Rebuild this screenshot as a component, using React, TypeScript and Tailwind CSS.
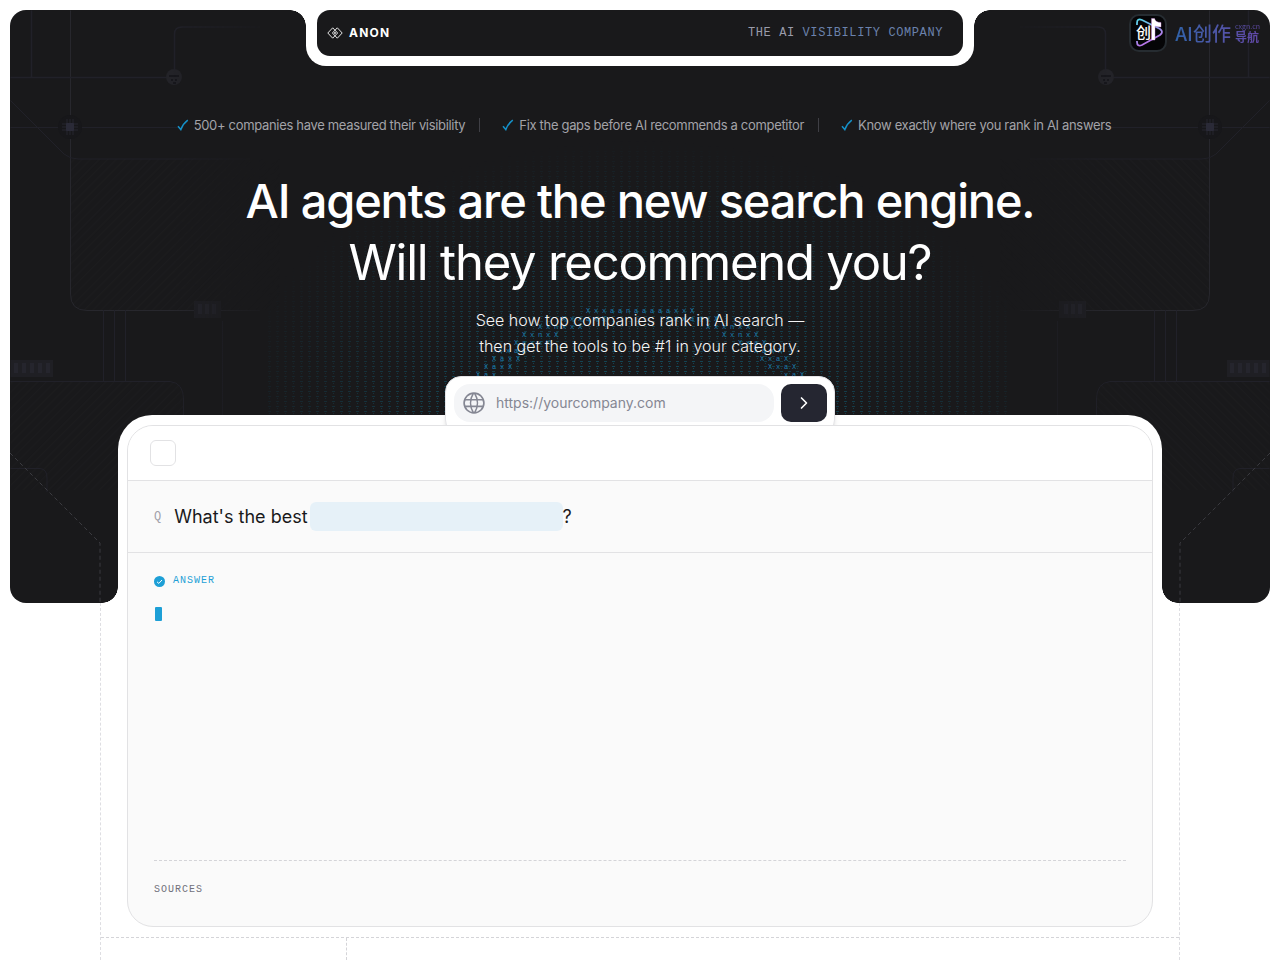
import { ChevronRight } from "lucide-react";

const BENEFITS = [
  "500+ companies have measured their visibility",
  "Fix the gaps before AI recommends a competitor",
  "Know exactly where you rank in AI answers",
];

// One ring of the ascii globe: first column centre, baseline, characters.
const ASCII_ROWS = [
  { x: 588, y: 303, chars: "XxxaanaaaaaxxX" },
  { x: 564, y: 311, chars: "XxxaxX" },
  { x: 668, y: 311, chars: "XxxanxX" },
  { x: 540, y: 319, chars: "XxnxxX" },
  { x: 708, y: 319, chars: "XxxnxX" },
  { x: 524, y: 327, chars: "XxnxX" },
  { x: 724, y: 327, chars: "XxnxX" },
  { x: 516, y: 335, chars: "XaxxX" },
  { x: 740, y: 335, chars: "XxaX" },
  { x: 500, y: 343, chars: "XxaX" },
  { x: 756, y: 343, chars: "XaxX" },
  { x: 494, y: 351, chars: "XaxX" },
  { x: 762, y: 351, chars: "XxaX" },
  { x: 486, y: 359, chars: "XaxX" },
  { x: 770, y: 359, chars: "XxaX" },
  { x: 478, y: 367, chars: "Xax" },
  { x: 786, y: 367, chars: "xaX" },
];

function AnonMark() {
  return (
    <svg viewBox="0 0 16 12" className="h-3 w-4" fill="none" stroke="currentColor" strokeWidth="0.9" aria-hidden="true">
      <path d="M5.700 0.800 0.800 6 5.700 11.200 10.600 6Z" />
      <path d="M10.300 0.800 5.400 6 10.300 11.200 15.200 6Z" />
      <path d="M8 5.200 8.800 6 8 6.800 7.200 6Z" />
    </svg>
  );
}

function CheckMark() {
  return (
    <svg viewBox="0 0 12 12" className="h-3 w-3 text-[#1590c8]" fill="none" stroke="currentColor" strokeWidth="1.5" aria-hidden="true">
      <path d="M1 7.2 3.8 10.6C5.4 6.6 7.5 3.6 10.8 1.2" />
    </svg>
  );
}

function WorldIcon() {
  return (
    <svg viewBox="2 2 20 20" className="h-[22px] w-[22px] shrink-0" fill="none" stroke="currentColor" strokeWidth="1.5" aria-hidden="true">
      <circle cx="12" cy="12" r="9" />
      <path d="M3.6 9h16.8M3.6 15h16.8M11.5 3a17 17 0 0 0 0 18M12.5 3a17 17 0 0 1 0 18" />
    </svg>
  );
}

function Circuit({ className, id }: { className: string; id: string }) {
  return (
    <svg viewBox="0 0 270 593" className={className} fill="none" stroke="#212129" aria-hidden="true">
      <defs>
        <pattern id={id} width="6" height="6" patternUnits="userSpaceOnUse" patternTransform="rotate(45)">
          <path d="M0 0V6" stroke="#1c1c1e" strokeWidth="3" />
        </pattern>
        <linearGradient id={`${id}-fade`} x1="0" x2="1">
          <stop offset="0" stopColor="#fff" />
          <stop offset="0.6" stopColor="#fff" />
          <stop offset="1" stopColor="#000" />
        </linearGradient>
        <mask id={`${id}-mask`} maskUnits="userSpaceOnUse" x="0" y="0" width="270" height="593">
          <rect width="270" height="593" fill={`url(#${id}-fade)`} />
        </mask>
      </defs>
      <g mask={`url(#${id}-mask)`}>
        <path d="M60 149H270V300H76Q60 300 60 284ZM0 372H160Q173 372 173 388V480H0Z" fill={`url(#${id})`} stroke="none" />
        <path d="M60.5 0V284Q60.5 300.5 77 300.5H250" stroke="#27272d" />
        <path d="M21.5 0V67M0 67.5H164M164.5 67V24Q164.5 17 172 17H250" strokeWidth="1.5" />
        <path d="M0 117.5H170M0 90 54 144Q60 149 68 149H240" />
        <path d="M93.5 300V371M104.5 300V371M115.5 300V371M212.5 311V405M0 371.5H160Q173.5 373 173.5 389V405" />
        <path d="M0 458.5H30Q37 459 37 468V482" />
        <g fill="#1f1f24" stroke="none">
          <rect x="184" y="291" width="27" height="17" />
          <rect x="0" y="350" width="43" height="17" />
          <circle cx="164" cy="67" r="8" fill="#232328" />
        </g>
        <circle cx="60" cy="117" r="12" fill="#17171a" stroke="none" />
        <path d="M57 109v16M60 109v16M63 109v16M52 114h16M52 117h16M52 120h16" stroke="#26262f" />
        <rect x="56" y="113" width="8" height="8" rx="1" fill="#2a2a37" stroke="none" />
        <path d="M159 66h10M161 70h2M165 70h2M163 73h3" stroke="#151518" strokeWidth="1.5" />
        <path d="M190 294v10M197 294v10M204 294v10M6 353v10M14 353v10M22 353v10M30 353v10M38 353v10" stroke="#25252d" strokeWidth="4" />
      </g>
      <path d="M0 443 90 533V593" stroke="#3b3b40" strokeDasharray="4 3" />
    </svg>
  );
}

function AsciiGlobe() {
  return (
    <svg viewBox="250 0 760 406" className="absolute bottom-0 left-1/2 h-[406px] w-[760px] -translate-x-1/2" aria-hidden="true">
      <defs>
        <pattern id="ascii-dash" width="8" height="5" patternUnits="userSpaceOnUse">
          <path d="M2 1.5h3" stroke="#0f7f9e" />
          <path d="M3 3.5h1" stroke="#0f7f9e" />
        </pattern>
        <radialGradient id="ascii-fade" gradientUnits="userSpaceOnUse" cx="0" cy="0" r="1" gradientTransform="translate(630 420) scale(420 290)">
          <stop offset="0" stopColor="#fff" stopOpacity="0.5" />
          <stop offset="0.5" stopColor="#fff" stopOpacity="0.36" />
          <stop offset="0.85" stopColor="#fff" stopOpacity="0.12" />
          <stop offset="1" stopColor="#fff" stopOpacity="0" />
        </radialGradient>
        <mask id="ascii-mask" maskUnits="userSpaceOnUse" x="250" y="130" width="760" height="280">
          <rect x="258" y="130" width="744" height="280" fill="url(#ascii-fade)" />
        </mask>
      </defs>
      <rect x="250" y="130" width="760" height="276" fill="url(#ascii-dash)" mask="url(#ascii-mask)" />
      <g fill="#1a7cab" fontSize="7" fontFamily="Liberation Mono, monospace">
        {ASCII_ROWS.map((row) => (
          <text key={`${row.x}-${row.y}`} x={row.chars.split("").map((_, i) => row.x - 12 + i * 8).join(" ")} y={row.y}>
            {row.chars}
          </text>
        ))}
      </g>
    </svg>
  );
}

function PartnerLogo() {
  return (
    <a href="#partner" className="absolute right-[10px] top-1 flex items-center gap-2">
      <svg viewBox="0 0 38 38" className="h-[38px] w-[38px]" aria-hidden="true">
        <defs>
          <linearGradient id="play" x1="0" y1="0" x2="0.4" y2="1">
            <stop offset="0" stopColor="#55d5e8" />
            <stop offset="1" stopColor="#c06be8" />
          </linearGradient>
        </defs>
        <rect x="1" y="1" width="36" height="36" rx="9" fill="#050507" stroke="#262c31" strokeWidth="2" />
        <path d="M8 11V9Q8 4 13 6L31 15Q35 18 31 21L13 31Q8 33 8 28V27" fill="none" stroke="url(#play)" strokeWidth="1.8" />
        <text x="7" y="24" fontSize="15" fontWeight="500" fill="#fff" fontFamily="Noto Sans CJK SC, sans-serif">创</text>
        <path d="M22.5 26V4.500H25.500Q26.500 8.500 32 8.500V13Q28 13 26 12V26Z" fill="#fff" stroke="#d58be8" strokeWidth="0.4" />
      </svg>
      <span className="flex items-center gap-1 bg-linear-to-r from-[#2f62a8] to-[#6248a8] bg-clip-text font-['Noto_Sans_CJK_SC',sans-serif] text-transparent">
        <span className="text-[19px] font-medium leading-6">AI创作</span>
        <span className="flex flex-col">
          <span className="text-[7px] leading-[7px]">cxgn.cn</span>
          <span className="text-[12px] font-bold leading-[13px]">导航</span>
        </span>
      </span>
    </a>
  );
}

function Hero() {
  return (
    <section className="relative h-[593px] overflow-hidden rounded-2xl bg-[#19191b] text-white">
      <Circuit id="hatch-left" className="absolute left-0 top-0 h-[593px] w-[270px]" />
      <Circuit id="hatch-right" className="absolute right-0 top-0 h-[593px] w-[270px] -scale-x-100" />
      <div className="absolute inset-x-0 top-0 h-[406px]">
        <AsciiGlobe />
      </div>
      <PartnerLogo />

      {/* sits above the white card frame but below the card itself */}
      <div className="relative z-10 flex flex-col items-center pt-[106px]">
        <ul className="flex pl-2 text-[13px] leading-[18px] tracking-tight text-[#a3a3a8]">
          {BENEFITS.map((benefit) => (
            <li key={benefit} className="group flex items-center gap-[5px]">
              <CheckMark />
              {benefit}
              <span className="ml-[9px] mr-[22px] h-[14px] w-px bg-[#3f3f45] group-last:hidden" />
            </li>
          ))}
        </ul>
        <h1 className="mt-[36px] text-center leading-[62px]">
          <span className="block text-[47px] font-medium tracking-tight">AI agents are the new search engine.</span>
          <span className="block text-[49px] tracking-tight">Will they recommend you?</span>
        </h1>
        <p className="mt-[13px] text-center text-[16px] font-light leading-[26px] text-[#f4f4f5]">
          See how top companies rank in AI search —
          <br />
          then get the tools to be #1 in your category.
        </p>
        <form className="mt-[17px] flex h-[60px] w-[390px] gap-[7px] rounded-2xl border border-[#e4e4e7] bg-white pl-2 pr-[7px] pt-[7px] shadow-md">
          <label className="flex h-[38px] grow items-center gap-[11px] rounded-2xl bg-[#f4f5f7] px-[9px] text-[#858793]">
            <WorldIcon />
            <input
              type="url"
              aria-label="Company website"
              placeholder="https://yourcompany.com"
              className="w-full bg-transparent text-[14px] leading-5 outline-none placeholder:text-[#858793]"
            />
          </label>
          <button type="button" aria-label="Check visibility" className="flex h-[38px] w-[46px] items-center justify-center rounded-[10px] bg-[#252631] text-white">
            <ChevronRight className="h-5 w-5" aria-hidden="true" />
          </button>
        </form>
      </div>
    </section>
  );
}

function NavBar() {
  return (
    <header className="absolute left-1/2 top-0 w-[668px] -translate-x-1/2 rounded-b-[20px] bg-white px-[11px] py-[10px]">
      <span className="absolute -left-4 top-[10px] h-4 w-4 bg-[radial-gradient(circle_at_0_100%,transparent_15.5px,white_16px)]" />
      <span className="absolute -right-4 top-[10px] h-4 w-4 bg-[radial-gradient(circle_at_100%_100%,transparent_15.5px,white_16px)]" />
      <nav className="flex h-[46px] items-center justify-between rounded-[13px] bg-[#19191b] pl-[10px] pr-5">
        <a href="#home" className="flex items-center gap-[6px] text-[12px] font-bold leading-4 tracking-widest text-white">
          <AnonMark />
          ANON
        </a>
        <p className="font-['Liberation_Mono',monospace] text-[12px] leading-4 tracking-wider text-[#6b82ad]">
          <span className="text-[#9a9cab]">THE AI</span> VISIBILITY COMPANY
        </p>
      </nav>
    </header>
  );
}

function AnswerCard() {
  return (
    <section className="relative mx-[108px] -mt-[188px] rounded-t-[34px] bg-white px-[9px] pt-[10px]">
      <span className="absolute -left-4 top-[172px] h-4 w-4 bg-[radial-gradient(circle_at_0_0,transparent_15.5px,white_16px)]" />
      <span className="absolute -right-4 top-[172px] h-4 w-4 bg-[radial-gradient(circle_at_100%_0,transparent_15.5px,white_16px)]" />
      <div className="relative z-20 overflow-hidden rounded-[26px] border border-[#e2e2e4] bg-[#fafafa]">
        <div className="flex h-[54px] items-center bg-white px-[22px]">
          <span className="h-[26px] w-[26px] rounded-md border border-[#e2e2e4]" />
        </div>
        <div className="flex h-[73px] items-center gap-[13px] border-y border-[#e2e2e4] px-[26px]">
          <span className="font-['Liberation_Mono',monospace] text-[12px] leading-4 text-[#a1a1aa]">Q</span>
          <h2 className="flex items-center text-[18px] leading-[28px] text-[#19191b]">
            What's the best
            <span className="ml-[2px] h-[29px] w-[253px] rounded-md bg-[#e6f1f8]" />?
          </h2>
        </div>
        <div className="flex h-[373px] flex-col px-[26px] pt-5 font-['Liberation_Mono',monospace] text-[10px] leading-4 tracking-widest">
          <p className="flex items-center gap-2 text-[#1d9fd6]">
            <svg viewBox="0 0 11 11" className="h-[11px] w-[11px]" aria-hidden="true">
              <circle cx="5.5" cy="5.5" r="5.5" fill="#1d9fd6" />
              <path d="M3 5.8 4.8 7.4 8 4" fill="none" stroke="#fff" />
            </svg>
            ANSWER
          </p>
          <span className="ml-px mt-[18px] h-[14px] w-[7px] rounded-[1px] bg-[#1d9fd6]" />
          <div className="mt-auto h-[66px] border-t border-dashed border-[#d4d4d8] pt-[21px] text-[#71717a]">SOURCES</div>
        </div>
      </div>
    </section>
  );
}

export default function App() {
  return (
    <div className="relative min-h-screen bg-white font-[Inter,sans-serif]">
      <main className="p-[10px] pb-0">
        <Hero />
        <AnswerCard />
        <div className="mx-[90px] -mt-[324px] h-[357px] border-x border-dashed border-[#dedee2] pt-[334px]">
          <div className="h-[23px] border-t border-dashed border-[#d4d4d8] pl-[245px]">
            <div className="h-full border-l border-dashed border-[#d4d4d8]" />
          </div>
        </div>
      </main>
      <NavBar />
    </div>
  );
}
